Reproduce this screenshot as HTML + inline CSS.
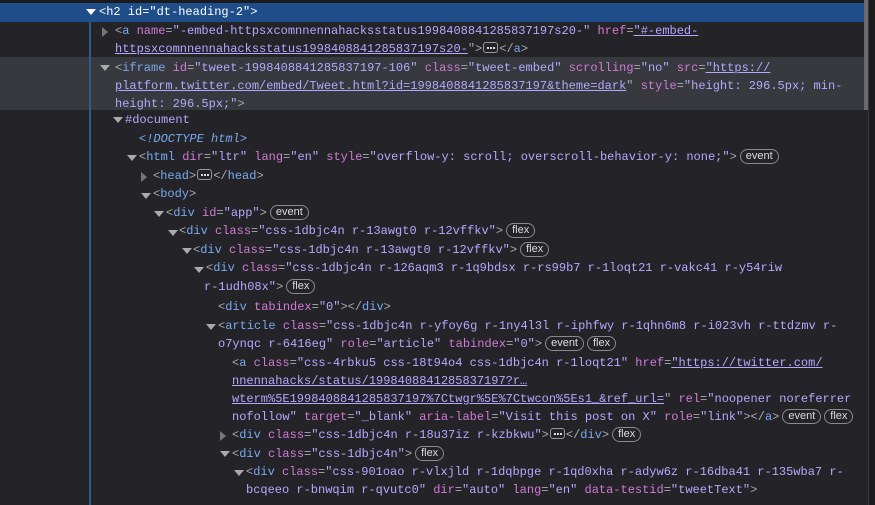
<!DOCTYPE html>
<html><head><style>
body{margin:0;width:875px;height:505px;background:#242428;overflow:hidden;position:relative;font-family:"Liberation Mono",monospace;font-size:12px;color:#a8a8b0}
.l{position:absolute;height:18.4px;line-height:18.4px;white-space:pre}
.t{color:#78a9f0}.n{color:#d17ad6}.v{color:#b5a8ff}.u{color:#b5a8ff;text-decoration:underline}
.a{position:absolute;width:0;height:0}
.dn{border-left:5px solid transparent;border-right:5px solid transparent;border-top:6px solid #aaa}
.rt{border-top:5px solid transparent;border-bottom:5px solid transparent;border-left:6px solid #777}
.b{display:inline-block;font-family:"Liberation Sans",sans-serif;font-size:11px;color:#ddd;border:1px solid #8a8a8a;border-radius:8px;padding:0 5px;line-height:13px;vertical-align:1px;margin-left:3px}
.e{display:inline-block;position:relative;width:15px;height:11px;border:1px solid #999;border-radius:3px;vertical-align:-1px;margin:0 1px;box-sizing:border-box}
.e::after{content:"";position:absolute;left:3px;top:4px;width:2px;height:2px;background:#ddd;box-shadow:3px 0 #ddd,6px 0 #ddd}
</style></head><body>
<div style="position:absolute;left:0;top:0;width:875px;height:3px;background:#1b1b1e"></div>
<div style="position:absolute;left:0;top:3px;width:864px;height:19px;background:#1f4d8a"></div>
<div style="position:absolute;left:0;top:57px;width:864px;height:53px;background:#37393e"></div>
<div style="position:absolute;left:89px;top:22px;width:2px;height:483px;background:#2f5a8c"></div>
<div style="position:absolute;left:864px;top:0;width:4px;height:110px;background:#6a6a6e"></div>
<div style="position:absolute;left:868px;top:0;width:7px;height:505px;background:#1c1c1f;border-left:1px solid #3a3a3e"></div>

<div class="a dn" style="left:86px;top:9px;border-top-color:#fff"></div>
<div class="l" style="left:99px;top:3px;color:#fff">&lt;h2 id="dt-heading-2"&gt;</div>

<div class="a rt" style="left:102px;top:27px"></div>
<div class="l" style="left:115px;top:22px">&lt;<span class="t">a</span> <span class="n">name</span>=<span class="v">"-embed-httpsxcomnnennahacksstatus1998408841285837197s20-"</span> <span class="n">href</span>=<span class="u">"#-embed-</span></div>
<div class="l" style="left:115px;top:40px"><span class="u">httpsxcomnnennahacksstatus1998408841285837197s20-</span>"&gt;<span class="e"></span>&lt;/<span class="t">a</span>&gt;</div>

<div class="a dn" style="left:100px;top:65px"></div>
<div class="l" style="left:115px;top:59px">&lt;<span class="t">iframe</span> <span class="n">id</span>=<span class="v">"tweet-1998408841285837197-106"</span> <span class="n">class</span>=<span class="v">"tweet-embed"</span> <span class="n">scrolling</span>=<span class="v">"no"</span> <span class="n">src</span>=<span class="u">"https://</span></div>
<div class="l" style="left:115px;top:77px"><span class="u">platform.twitter.com/embed/Tweet.html?id=1998408841285837197&amp;theme=dark</span>" <span class="n">style</span>=<span class="v">"height: 296.5px; min-</span></div>
<div class="l" style="left:115px;top:95px"><span class="v">height: 296.5px;"</span>&gt;</div>

<div class="a dn" style="left:113px;top:117px"></div>
<div class="l" style="left:125px;top:111px;color:#b5a8ff">#document</div>
<div class="l" style="left:139px;top:130px;color:#78a9f0;font-style:italic">&lt;!DOCTYPE html&gt;</div>
<div class="a dn" style="left:127px;top:155px"></div>
<div class="l" style="left:139px;top:148px">&lt;<span class="t">html</span> <span class="n">dir</span>=<span class="v">"ltr"</span> <span class="n">lang</span>=<span class="v">"en"</span> <span class="n">style</span>=<span class="v">"overflow-y: scroll; overscroll-behavior-y: none;"</span>&gt;<span class="b">event</span></div>
<div class="a rt" style="left:141px;top:172px"></div>
<div class="l" style="left:153px;top:167px">&lt;<span class="t">head</span>&gt;<span class="e"></span>&lt;/<span class="t">head</span>&gt;</div>
<div class="a dn" style="left:141px;top:193px"></div>
<div class="l" style="left:153px;top:185px">&lt;<span class="t">body</span>&gt;</div>
<div class="a dn" style="left:154px;top:211px"></div>
<div class="l" style="left:166px;top:204px">&lt;<span class="t">div</span> <span class="n">id</span>=<span class="v">"app"</span>&gt;<span class="b">event</span></div>
<div class="a dn" style="left:168px;top:230px"></div>
<div class="l" style="left:179px;top:222px">&lt;<span class="t">div</span> <span class="n">class</span>=<span class="v">"css-1dbjc4n r-13awgt0 r-12vffkv"</span>&gt;<span class="b">flex</span></div>
<div class="a dn" style="left:182px;top:248px"></div>
<div class="l" style="left:193px;top:241px">&lt;<span class="t">div</span> <span class="n">class</span>=<span class="v">"css-1dbjc4n r-13awgt0 r-12vffkv"</span>&gt;<span class="b">flex</span></div>
<div class="a dn" style="left:194px;top:267px"></div>
<div class="l" style="left:206px;top:259px">&lt;<span class="t">div</span> <span class="n">class</span>=<span class="v">"css-1dbjc4n r-126aqm3 r-1q9bdsx r-rs99b7 r-1loqt21 r-vakc41 r-y54riw</span></div>
<div class="l" style="left:204px;top:278px"><span class="v">r-1udh08x"</span>&gt;<span class="b">flex</span></div>
<div class="l" style="left:218px;top:298px">&lt;<span class="t">div</span> <span class="n">tabindex</span>=<span class="v">"0"</span>&gt;&lt;/<span class="t">div</span>&gt;</div>
<div class="a dn" style="left:206px;top:324px"></div>
<div class="l" style="left:218px;top:317px">&lt;<span class="t">article</span> <span class="n">class</span>=<span class="v">"css-1dbjc4n r-yfoy6g r-1ny4l3l r-iphfwy r-1qhn6m8 r-i023vh r-ttdzmv r-</span></div>
<div class="l" style="left:218px;top:335px"><span class="v">o7ynqc r-6416eg"</span> <span class="n">role</span>=<span class="v">"article"</span> <span class="n">tabindex</span>=<span class="v">"0"</span>&gt;<span class="b">event</span><span class="b">flex</span></div>
<div class="l" style="left:232px;top:354px">&lt;<span class="t">a</span> <span class="n">class</span>=<span class="v">"css-4rbku5 css-18t94o4 css-1dbjc4n r-1loqt21"</span> <span class="n">href</span>=<span class="u">"https://twitter.com/</span></div>
<div class="l" style="left:232px;top:372px"><span class="u">nnennahacks/status/1998408841285837197?r…</span></div>
<div class="l" style="left:232px;top:390px"><span class="u">wterm%5E1998408841285837197%7Ctwgr%5E%7Ctwcon%5Es1_&amp;ref_url=</span>" <span class="n">rel</span>=<span class="v">"noopener noreferrer</span></div>
<div class="l" style="left:232px;top:408px"><span class="v">nofollow"</span> <span class="n">target</span>=<span class="v">"_blank"</span> <span class="n">aria-label</span>=<span class="v">"Visit this post on X"</span> <span class="n">role</span>=<span class="v">"link"</span>&gt;&lt;/<span class="t">a</span>&gt;<span class="b">event</span><span class="b">flex</span></div>
<div class="a rt" style="left:220px;top:431px"></div>
<div class="l" style="left:232px;top:426px">&lt;<span class="t">div</span> <span class="n">class</span>=<span class="v">"css-1dbjc4n r-18u37iz r-kzbkwu"</span>&gt;<span class="e"></span>&lt;/<span class="t">div</span>&gt;<span class="b">flex</span></div>
<div class="a dn" style="left:220px;top:451px"></div>
<div class="l" style="left:232px;top:445px">&lt;<span class="t">div</span> <span class="n">class</span>=<span class="v">"css-1dbjc4n"</span>&gt;<span class="b">flex</span></div>
<div class="a dn" style="left:234px;top:470px"></div>
<div class="l" style="left:246px;top:463px">&lt;<span class="t">div</span> <span class="n">class</span>=<span class="v">"css-901oao r-vlxjld r-1dqbpge r-1qd0xha r-adyw6z r-16dba41 r-135wba7 r-</span></div>
<div class="l" style="left:246px;top:481px"><span class="v">bcqeeo r-bnwqim r-qvutc0"</span> <span class="n">dir</span>=<span class="v">"auto"</span> <span class="n">lang</span>=<span class="v">"en"</span> <span class="n">data-testid</span>=<span class="v">"tweetText"</span>&gt;</div>
</body></html>
